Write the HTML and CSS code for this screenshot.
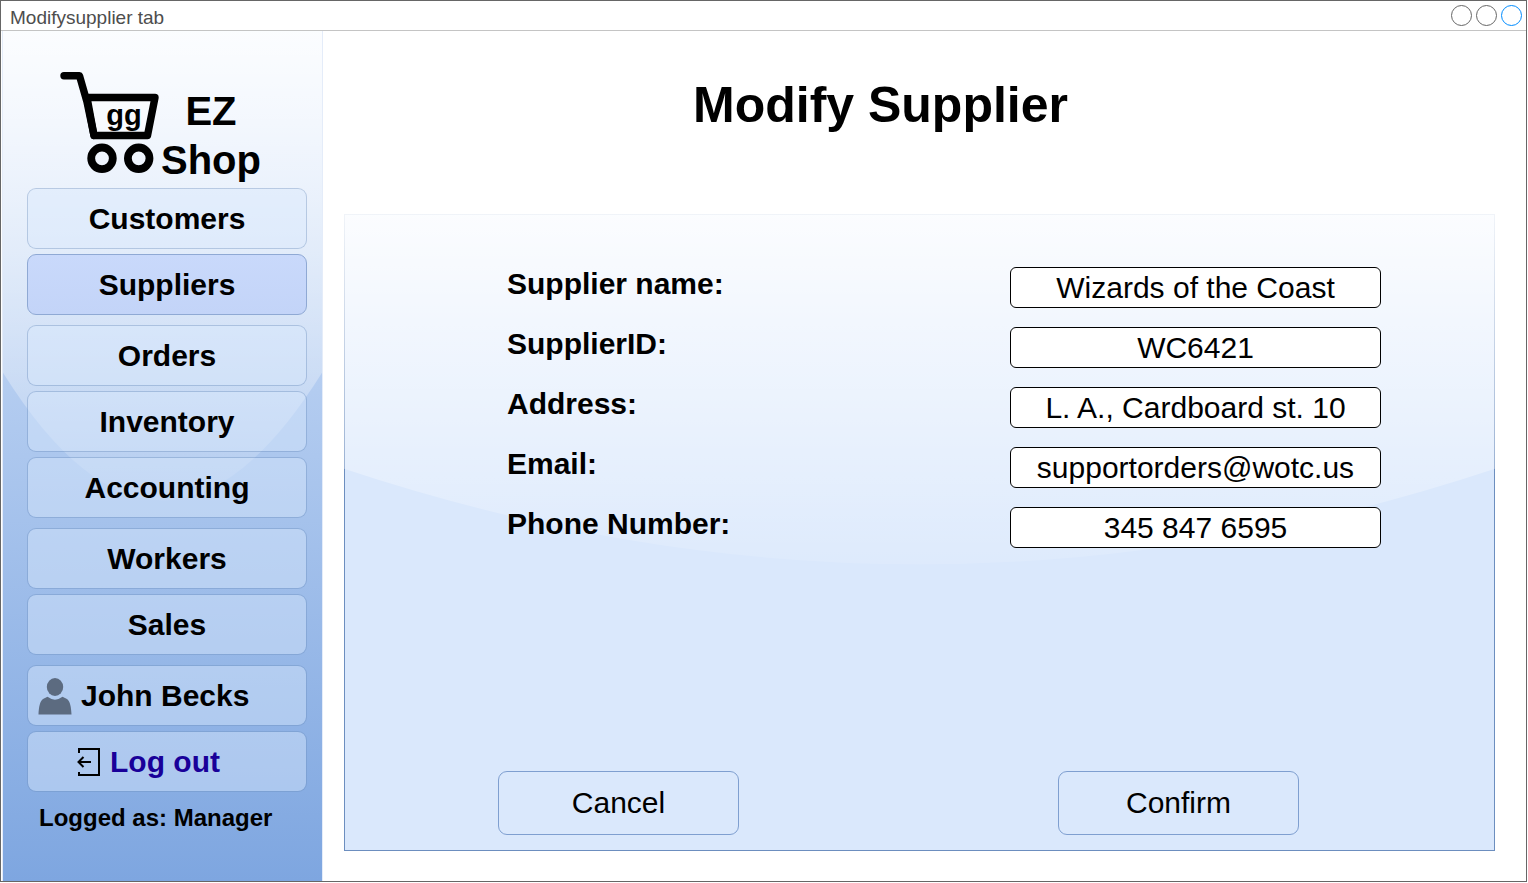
FILE: index.html
```html
<!DOCTYPE html>
<html lang="en">
<head>
  <meta charset="utf-8">
  <title>Modify Supplier</title>
  <link rel="stylesheet" href="styles.css">
</head>
<body>
  <div class="window">
    <header class="titlebar">
      <span class="titlebar-text">Modifysupplier tab</span>
      <span class="dots"><i class="dot"></i><i class="dot"></i><i class="dot dot-active"></i></span>
    </header>
    <div class="body">
      <aside class="sidebar">
        <svg class="glass" viewBox="0 0 100 100" preserveAspectRatio="none" aria-hidden="true">
          <defs>
            <linearGradient id="gloss" x1="0" y1="0" x2="0" y2="1">
              <stop offset="0" stop-color="#fff" stop-opacity=".9"/>
              <stop offset="1" stop-color="#fff" stop-opacity=".1"/>
            </linearGradient>
          </defs>
          <path d="M0 0V40.2Q50 70.2 100 40.2V0Z" fill="url(#gloss)"/>
        </svg>
        <div class="brand">
          <svg class="cart" viewBox="0 0 100 104" role="img" aria-label="Shopping cart">
            <g fill="none" stroke="#000" stroke-width="7.4" stroke-linecap="round" stroke-linejoin="round">
              <path d="M28 26.5H96L88.5 64.5H35Z" fill="#fff" fill-opacity=".4"/>
              <path d="M5 4.7H20.5L28 31L35 64.5"/>
              <circle cx="43" cy="87.3" r="10.8" stroke-width="7.8"/>
              <circle cx="79.7" cy="87.3" r="10.8" stroke-width="7.8"/>
            </g>
            <text class="cart-text" x="65" y="54" text-anchor="middle">gg</text>
          </svg>
          <div class="brand-name"><span>EZ</span><span>Shop</span></div>
        </div>
        <nav class="nav">
          <div class="nav-group">
            <button class="nav-item" type="button">Customers</button>
            <button class="nav-item nav-item-active" type="button">Suppliers</button>
          </div>
          <div class="nav-group">
            <button class="nav-item" type="button">Orders</button>
            <button class="nav-item" type="button">Inventory</button>
            <button class="nav-item" type="button">Accounting</button>
          </div>
          <div class="nav-group">
            <button class="nav-item" type="button">Workers</button>
            <button class="nav-item" type="button">Sales</button>
          </div>
          <div class="nav-group">
            <button class="nav-item nav-user" type="button">
              <svg class="user-icon" viewBox="0 0 34 38" aria-hidden="true">
                <ellipse cx="17" cy="10" rx="8.2" ry="9"/>
                <path d="M.5 37.500C.8 30 2 24 5 22L9.500 19.800Q17 25.500 24.500 19.800L29 22C32 24 33.200 30 33.500 37.500Z"/>
              </svg>
              John Becks
            </button>
            <button class="nav-item nav-logout" type="button">
              <svg class="logout-icon" viewBox="0 0 24 30" aria-hidden="true">
                <path d="M2 6V2H22V28H2V25M14 15H1.500M6.500 10L1.500 15L6.500 20"/>
              </svg>
              Log out
            </button>
          </div>
        </nav>
        <p class="role">Logged as: Manager</p>
      </aside>
      <main class="main">
        <h1 class="title">Modify Supplier</h1>
        <form class="panel">
          <svg class="glass glass-panel" viewBox="0 0 100 100" preserveAspectRatio="none" aria-hidden="true">
            <path d="M0 0V40Q50 70 100 40V0Z" fill="url(#gloss)"/>
          </svg>
          <div class="fields">
            <div class="field"><label for="name">Supplier name:</label><input id="name" type="text" value="Wizards of the Coast"></div>
            <div class="field"><label for="sid">SupplierID:</label><input id="sid" type="text" value="WC6421"></div>
            <div class="field"><label for="address">Address:</label><input id="address" type="text" value="L. A., Cardboard st. 10"></div>
            <div class="field"><label for="email">Email:</label><input id="email" type="text" value="supportorders@wotc.us"></div>
            <div class="field"><label for="phone">Phone Number:</label><input id="phone" type="text" value="345 847 6595"></div>
          </div>
          <div class="actions">
            <button class="action" type="button">Cancel</button>
            <button class="action" type="button">Confirm</button>
          </div>
        </form>
      </main>
    </div>
  </div>
</body>
</html>
```

FILE: styles.css
```css
* {
  box-sizing: border-box;
}

body {
  margin: 0;
  padding: 0 1px 1px 0;
  min-height: 100vh;
  display: flex;
  background: #fff;
  color: #000;
  font-family: "Liberation Sans", Arial, sans-serif;
}

button,
input {
  margin: 0;
  color: inherit;
  font: inherit;
}

.window {
  flex: 1;
  display: flex;
  flex-direction: column;
  border: 1px solid #666;
}

.titlebar {
  height: 30px;
  padding: 0 4px 0 9px;
  display: flex;
  align-items: center;
  justify-content: space-between;
  border-bottom: 1px solid #c4c4c4;
}

.titlebar-text {
  padding-top: 4px;
  font-size: 19px;
  line-height: 24px;
  color: #4d4d4d;
}

.dots {
  display: flex;
  gap: 4px;
}

.dot {
  width: 21px;
  height: 21px;
  border: 1px solid #666;
  border-radius: 50%;
}

.dot-active {
  border-color: #008cff;
}

.body {
  flex: 1;
  display: flex;
  padding-left: 1px;
}

.sidebar {
  position: relative;
  width: 321px;
  padding: 40px 15px 16px 24px;
  border: 1px solid #e4ecf9;
  border-top: 0;
  border-bottom: 0;
  background: linear-gradient(#dae8fc, #7ea6e0);
}

.glass {
  position: absolute;
  inset: 0;
  width: 100%;
  height: 100%;
}

.glass-panel {
  inset: -1px;
  width: calc(100% + 2px);
  height: calc(100% + 2px);
}

.brand {
  position: relative;
  height: 117px;
  padding-left: 32px;
  display: flex;
  gap: 2px;
}

.cart {
  width: 100px;
  height: 104px;
}

.cart-text {
  font-size: 29px;
  font-weight: 700;
}

.brand-name {
  padding-top: 16px;
  display: flex;
  flex-direction: column;
  text-align: center;
  font-size: 40px;
  font-weight: 700;
  line-height: 49px;
}

.nav {
  position: relative;
  display: flex;
  flex-direction: column;
  gap: 10px;
}

.nav-group {
  display: flex;
  flex-direction: column;
  gap: 5px;
}

.nav-item {
  width: 100%;
  height: 61px;
  padding: 0;
  border: 1px solid rgba(108, 142, 191, .4);
  border-radius: 9px;
  background: rgba(218, 232, 252, .45) padding-box;
  font-size: 30px;
  font-weight: 700;
}

.nav-item-active {
  border-color: #8fa9d4;
  background: linear-gradient(#c9d9fb, #c3d4f8);
}

.nav-user,
.nav-logout {
  display: flex;
  align-items: center;
  gap: 9px;
}

.nav-user {
  padding-left: 10px;
}

.user-icon {
  width: 34px;
  height: 38px;
  fill: #5c6b80;
}

.nav-logout {
  justify-content: center;
  padding-right: 37px;
  color: #190099;
}

.logout-icon {
  width: 24px;
  height: 30px;
  fill: none;
  stroke: #000;
  stroke-width: 2;
}

.role {
  position: relative;
  margin: 12px 0 0 12px;
  font-size: 24px;
  font-weight: 700;
  line-height: 28px;
}

.main {
  flex: 1;
  display: flex;
  flex-direction: column;
  padding: 44px 31px 30px 21px;
}

.title {
  margin: 0 78px 79px 0;
  text-align: center;
  font-size: 50px;
  line-height: 60px;
}

.panel {
  position: relative;
  flex: 1;
  display: flex;
  flex-direction: column;
  justify-content: space-between;
  border: 1px solid #6c8ebf;
  background: #dae8fc;
}

.fields {
  position: relative;
  display: flex;
  flex-direction: column;
  gap: 19px;
  padding: 52px 113px 0 162px;
}

.field {
  display: flex;
  align-items: flex-start;
  justify-content: space-between;
}

.field label {
  font-size: 30px;
  font-weight: 700;
  line-height: 34px;
}

.field input {
  width: 371px;
  height: 41px;
  padding: 0 8px;
  border: 1px solid #000;
  border-radius: 6px;
  background: #fff;
  text-align: center;
  font-size: 30px;
}

.actions {
  position: relative;
  display: flex;
  justify-content: space-between;
  padding: 0 195px 15px 153px;
}

.action {
  width: 241px;
  height: 64px;
  border: 1px solid #7f9fd0;
  border-radius: 9px;
  background: #dae8fc;
  font-size: 30px;
}
```
